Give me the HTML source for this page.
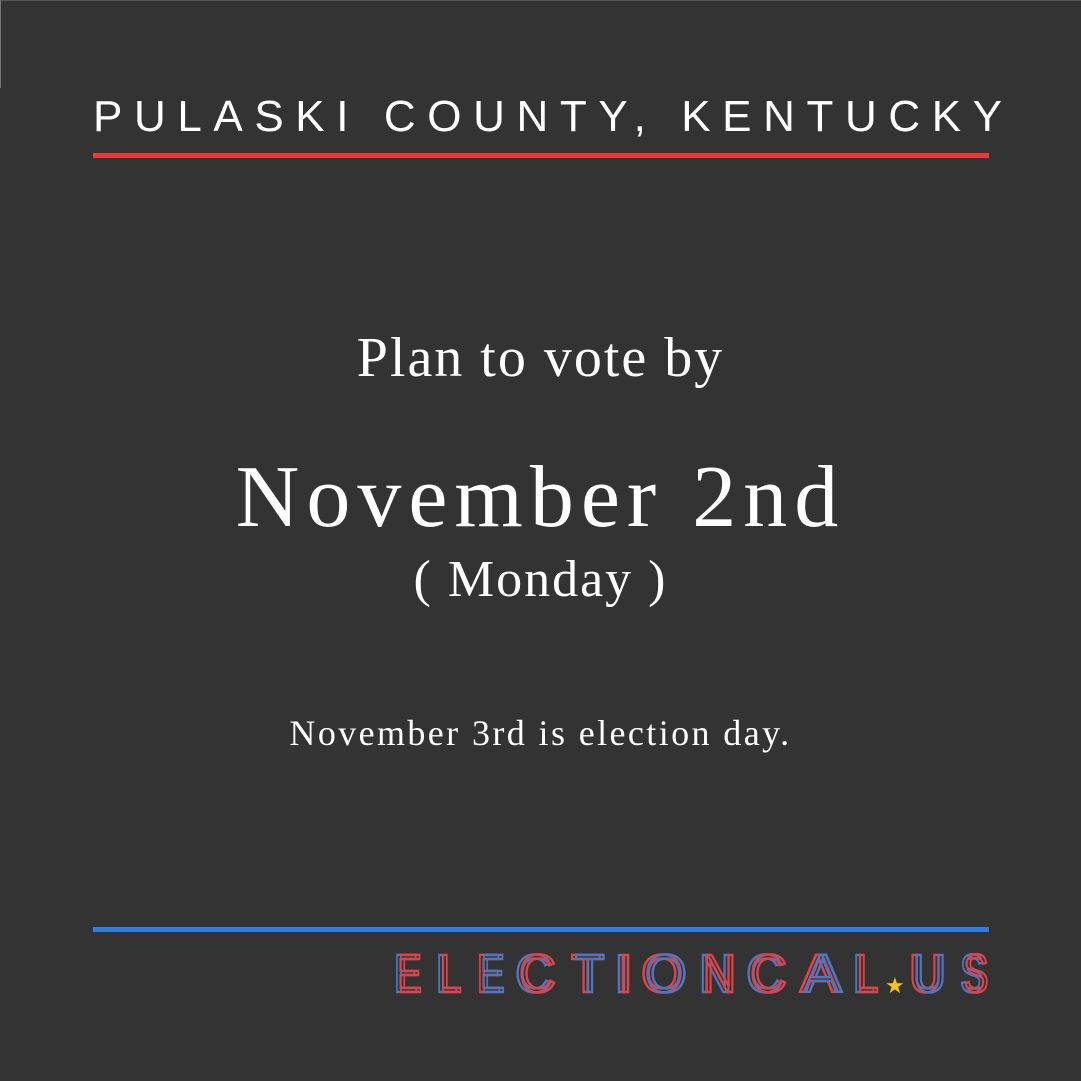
<!DOCTYPE html>
<html><head><meta charset="utf-8"><style>
html,body{margin:0;padding:0;}
body{width:1081px;height:1081px;background:#333333;position:relative;overflow:hidden;font-family:"Liberation Serif",serif;color:#fff;}
.edge{position:absolute;left:0;top:0;width:1081px;height:1px;background:#555;}
.edgel{position:absolute;left:0;top:0;width:1px;height:88px;background:#777;}
.t{position:absolute;left:0;width:1081px;text-align:center;white-space:nowrap;}
#title{left:93px;width:auto;top:92px;font-family:"Liberation Sans",sans-serif;font-size:44px;letter-spacing:11.6px;text-align:left;}
.line{position:absolute;left:93px;width:896px;height:5px;}
#plan{top:326px;font-size:56px;letter-spacing:2px;}
#nov{top:447px;font-size:88px;letter-spacing:7px;}
#mon{top:550px;font-size:52px;letter-spacing:2px;}
#day{top:712px;font-size:36px;letter-spacing:2.4px;}
.L{position:absolute;top:947px;font-family:"Liberation Sans",sans-serif;font-size:54px;line-height:1;color:transparent;-webkit-text-stroke:2.5px;transform-origin:left top;}
.r{-webkit-text-stroke-color:#e8403f}
.b{-webkit-text-stroke-color:#4a78c4}
.e{transform:scaleX(.66)} .l{transform:scaleX(.72)} .c{transform:scaleX(.95)} .tt{transform:scaleX(.9)}
.n{transform:scaleX(.85)} .a{transform:scaleX(1.05)} .u{transform:scaleX(.85)} .s{transform:scaleX(.68)}
</style></head><body>
<div class="edge"></div><div class="edgel"></div>
<div id="title" class="t">PULASKI COUNTY, KENTUCKY</div>
<div class="line" style="top:153px;background:#e83a3a"></div>
<div id="plan" class="t">Plan to vote by</div>
<div id="nov" class="t">November 2nd</div>
<div id="mon" class="t">( Monday )</div>
<div id="day" class="t">November 3rd is election day.</div>
<div class="line" style="top:927px;background:#2f7de0"></div>

<span class="L b e" style="left:394px">E</span><span class="L r e" style="left:398px">E</span>
<span class="L b l" style="left:436px">L</span><span class="L r l" style="left:440px">L</span>
<span class="L r e" style="left:477px">E</span><span class="L b e" style="left:481px">E</span>
<span class="L b c" style="left:515px">C</span><span class="L r c" style="left:519px">C</span>
<span class="L r tt" style="left:571px">T</span><span class="L b tt" style="left:575px">T</span>
<span class="L b" style="left:614px">I</span><span class="L r" style="left:618px">I</span>
<span class="L r" style="left:641px">O</span><span class="L b" style="left:645px">O</span>
<span class="L b n" style="left:699px">N</span><span class="L r n" style="left:703px">N</span>
<span class="L b c" style="left:746px">C</span><span class="L r c" style="left:750px">C</span>
<span class="L r a" style="left:800px">A</span><span class="L b a" style="left:804px">A</span>
<span class="L b l" style="left:853px">L</span><span class="L r l" style="left:857px">L</span>
<span style="position:absolute;left:885px;top:975px;color:#f5c518;font-size:22px;line-height:1">★</span>
<span class="L r u" style="left:909px">U</span><span class="L b u" style="left:913px">U</span>
<span class="L b s" style="left:960px">S</span><span class="L r s" style="left:964px">S</span>
</body></html>
